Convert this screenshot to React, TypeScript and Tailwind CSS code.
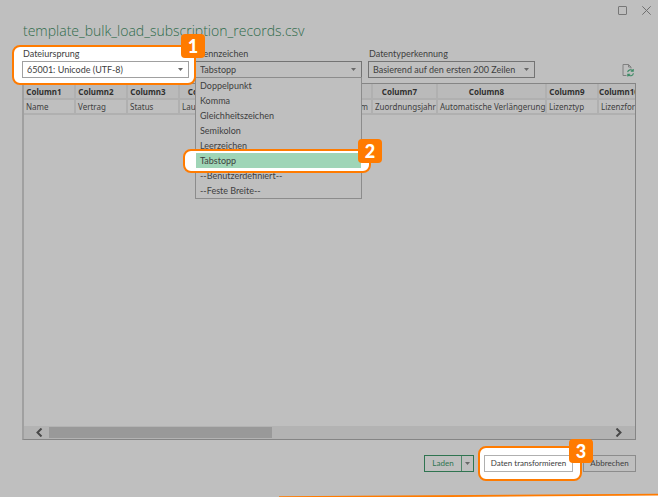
import type { ReactNode } from "react";

const delimiters = [
  "Doppelpunkt",
  "Komma",
  "Gleichheitszeichen",
  "Semikolon",
  "Leerzeichen",
  "Tabstopp",
  "--Benutzerdefiniert--",
  "--Feste Breite--",
];

const columns = [
  { head: "Column1", value: "Name", width: "w-[51px]" },
  { head: "Column2", value: "Vertrag", width: "w-[52px]" },
  { head: "Column3", value: "Status", width: "w-[52px]" },
  { head: "Column4", value: "Laufzeit", width: "w-[63px]" },
  { head: "Column5", value: "Beginn", width: "w-[60px]" },
  { head: "Column6", value: "Enddatum", width: "w-[70px]", align: "text-right pr-[3px]" },
  { head: "Column7", value: "Zuordnungsjahr", width: "w-[65px]" },
  { head: "Column8", value: "Automatische Verlängerung", width: "w-[109px]" },
  { head: "Column9", value: "Lizenztyp", width: "w-[52px]" },
  { head: "Column10", value: "Lizenzform", width: "w-[52px]" },
];

function Caret() {
  return (
    <svg className="h-[3px] w-[5px]" viewBox="0 0 5 3" aria-hidden="true">
      <path d="M0 0h5L2.500 3z" fill="#686868" />
    </svg>
  );
}

function Badge({ children, place }: { children: ReactNode; place: string }) {
  return (
    <span
      className={`absolute z-20 flex h-6 w-6 items-center justify-center rounded-[4px] bg-[#ff7b00] text-[18px] leading-6 font-black text-white ${place}`}
    >
      {children}
    </span>
  );
}

function Field({
  id,
  label,
  value,
  border,
  lit,
  children,
}: {
  id: string;
  label: string;
  value: string;
  border: string;
  lit?: boolean;
  children?: ReactNode;
}) {
  return (
    <div className={`relative w-[167px] shrink-0 ${lit ? "z-20" : "z-10"}`}>
      {lit && (
        <span className="absolute -top-[2px] -right-[7px] -bottom-[7px] -left-[10px] rounded-lg border-2 border-[#ff7b00] bg-white" />
      )}
      <label htmlFor={id} className="relative block pb-[1px] pl-[1px] text-[9px] leading-[13px]">
        {label}
      </label>
      <div className="relative">
        <select
          id={id}
          className={`block h-[17px] w-full appearance-none border bg-transparent pl-1 text-[9px] leading-[13px] ${border}`}
        >
          <option>{value}</option>
        </select>
        <span className="pointer-events-none absolute top-[7px] right-[6px]">
          <Caret />
        </span>
        {children}
      </div>
    </div>
  );
}

export default function App() {
  return (
    <main className="relative flex min-h-screen flex-col overflow-hidden bg-[#bfbfbf] px-[22px] pb-[25px] font-['Lato',sans-serif] text-[#404040]">
      <div className="-mr-[15px] flex h-[21px] items-center justify-end gap-[15px]">
        <button aria-label="Maximieren" className="block">
          <svg className="h-[9px] w-[9px]" viewBox="0 0 9 9">
            <rect x=".5" y=".5" width="8" height="8" rx=".5" fill="none" stroke="#777" />
          </svg>
        </button>
        <button aria-label="Schließen" className="block">
          <svg className="h-[9px] w-[9px]" viewBox="0 0 9 9">
            <path d="M.3.3l8.400 8.400M8.700.3L.3 8.700" fill="none" stroke="#707070" />
          </svg>
        </button>
      </div>

      <h1 className="pl-[1px] font-['Open_Sans',sans-serif] text-[14px] leading-[20px] font-light whitespace-nowrap text-[#2f6b4b]">
        template_bulk_load_subscription_records.csv
      </h1>

      <form className="mt-[6px] flex items-end gap-[6px]">
        <Field
          id="origin"
          label="Dateiursprung"
          value="65001: Unicode (UTF-8)"
          border="border-[#a0a0a0]"
          lit
        >
          <Badge place="-top-[27px] -right-[16px]">1</Badge>
        </Field>
        <Field id="delimiter" label="Trennzeichen" value="Tabstopp" border="border-[#737373]">
          <ul
            role="listbox"
            aria-label="Trennzeichen"
            className="absolute top-[16px] left-0 w-full border border-[#8c8c8c] bg-[#bfbfbf] text-[9px] leading-[15px]"
          >
            {delimiters.map((name) =>
              name === "Tabstopp" ? (
                <li key={name} role="option" aria-selected="true" className="relative z-10">
                  <span className="absolute -top-1 -right-[10px] -bottom-[5px] -left-[13px] rounded-lg border-2 border-[#ff7b00] bg-white" />
                  <span className="relative block bg-[#9fd5b7] pl-1">{name}</span>
                  <Badge place="-top-[14px] -right-[21px]">2</Badge>
                </li>
              ) : (
                <li key={name} role="option" aria-selected="false" className="pl-1">
                  {name}
                </li>
              ),
            )}
          </ul>
        </Field>
        <Field
          id="detection"
          label="Datentyperkennung"
          value="Basierend auf den ersten 200 Zeilen"
          border="border-[#737373]"
        />
        <button type="button" aria-label="Aktualisieren" className="mr-[2px] mb-[1px] ml-auto block">
          <svg className="h-[13px] w-[12px]" viewBox="0 0 12 13" fill="none">
            <path d="M4.500 11.500H1V.5h5.500L9 3v1.500M6.500.5V3H9" stroke="#808080" />
            <path
              d="M5.600 8.200A2.900 2.900 0 0 1 10.800 7M11.200 4.900v2.400H8.800M11.400 9.200A2.900 2.900 0 0 1 6.200 10.600M5.800 12.500v-2.300h2.400"
              stroke="#3c8a65"
              strokeWidth="1.100"
            />
          </svg>
        </button>
      </form>

      <section className="mt-[5px] flex flex-1 flex-col overflow-hidden border border-l-2 border-[#858585] border-l-[#a0a0a0]">
        <table className="w-[626px] table-fixed border-collapse font-['Noto_Sans',sans-serif] text-[8px] leading-[13px]">
          <thead>
            <tr className="bg-[#bababa]">
              {columns.map((c) => (
                <th
                  key={c.head}
                  className={`h-[15px] border-r-2 border-b-2 border-[#b0b0b0] p-0 pr-[10px] text-center font-bold text-[#303030] ${c.width}`}
                >
                  {c.head}
                </th>
              ))}
            </tr>
          </thead>
          <tbody>
            <tr>
              {columns.map((c) => (
                <td
                  key={c.head}
                  className={`h-[15px] border-r-2 border-b-2 border-[#b0b0b0] p-0 pl-[2px] whitespace-nowrap ${c.align ?? ""}`}
                >
                  {c.value}
                </td>
              ))}
            </tr>
          </tbody>
        </table>
        <div className="mt-auto flex h-[13px] items-center bg-[#b3b3b3] pr-[12px] pl-[11px]">
          <button aria-label="Nach links" className="block">
            <svg className="h-[9px] w-[8px]" viewBox="0 0 8 9">
              <path d="M6.500.5L2.500 4.500l4 4" fill="none" stroke="#484848" strokeWidth="2" />
            </svg>
          </button>
          <div className="mr-[8px] ml-[6px] h-[11px] flex-1">
            <div className="h-full w-2/5 bg-[#999]" />
          </div>
          <button aria-label="Nach rechts" className="block">
            <svg className="h-[9px] w-[8px]" viewBox="0 0 8 9">
              <path d="M1.500.5l4 4-4 4" fill="none" stroke="#484848" strokeWidth="2" />
            </svg>
          </button>
        </div>
      </section>

      <footer className="mt-[15px] flex justify-end gap-[10px] text-[8px] leading-[13px]">
        <div className="flex h-[17px] border border-[#2f7450]">
          <button className="w-[37px] border-r border-[#4f8668] text-[#2f7450]">Laden</button>
          <button aria-label="Weitere Ladeoptionen" className="flex w-[11px] items-center justify-center">
            <Caret />
          </button>
        </div>
        <div className="relative z-10">
          <span className="absolute -top-[9px] -right-[9px] -bottom-[9px] -left-[6px] rounded-lg border-2 border-[#ff7b00] bg-white" />
          <button className="relative block h-[17px] w-[89px] border border-[#b0b0b0] bg-white whitespace-nowrap">
            Daten transformieren
          </button>
          <Badge place="-top-[16px] -right-[20px]">3</Badge>
        </div>
        <button className="h-[17px] w-[53px] border border-[#8c8c8c]">Abbrechen</button>
      </footer>

      <svg
        className="absolute bottom-0 left-0 h-[4px] w-full"
        viewBox="0 0 658 4"
        preserveAspectRatio="none"
        aria-hidden="true"
      >
        <path d="M410 4L658 2v2z" fill="#fff" />
        <path d="M279 3.300L658 .8v1.700L450 4H279z" fill="#ff7b00" />
      </svg>
    </main>
  );
}
